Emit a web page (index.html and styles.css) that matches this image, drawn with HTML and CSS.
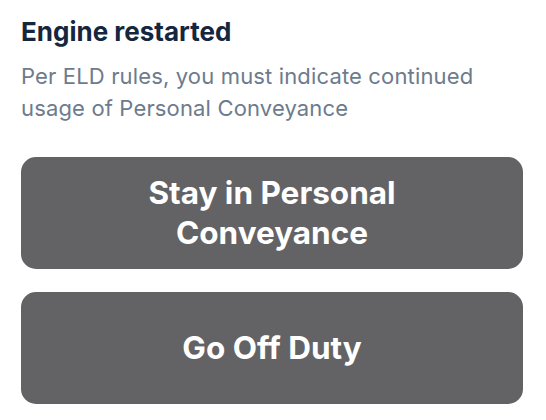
FILE: index.html
```html
<!DOCTYPE html>
<html lang="en">
<head>
    <meta charset="UTF-8">
    <meta name="viewport" content="width=device-width, initial-scale=1.0">
    <title>Engine restarted</title>
    <link rel="stylesheet" href="styles.css">
</head>
<body>
    <div class="prompt">
        <h1 class="prompt-title">Engine restarted</h1>
        <p class="prompt-text">Per ELD rules, you must indicate continued usage of Personal Conveyance</p>

        <div class="actions">
            <button class="action-button">Stay in Personal<br>Conveyance</button>
            <button class="action-button">Go Off Duty</button>
        </div>
    </div>
</body>
</html>
```

FILE: styles.css
```css
/* General styles */
body {
    margin: 0;
    padding: 0;
    font-family: Inter, "Noto Sans", sans-serif;
    background-color: #ffffff;
}

/* Prompt container */
.prompt {
    padding: 17px 23px 0 21px;
}

.prompt-title {
    margin: 0;
    font-size: 26px;
    line-height: 30px;
    font-weight: 700;
    color: #15263d;
}

.prompt-text {
    max-width: 480px;
    margin: 13px 0 0 0;
    font-size: 22px;
    line-height: 32px;
    letter-spacing: 0.15px;
    color: #6d7b8d;
}

/* Buttons */
.actions {
    display: flex;
    flex-direction: column;
    gap: 23px;
    margin-top: 33px;
}

.action-button {
    height: 112px;
    padding: 0 20px;
    border: none;
    border-radius: 15px;
    background-color: #636366;
    color: #ffffff;
    font-family: inherit;
    font-size: 31.5px;
    line-height: 40px;
    font-weight: 700;
    cursor: pointer;
}
```
